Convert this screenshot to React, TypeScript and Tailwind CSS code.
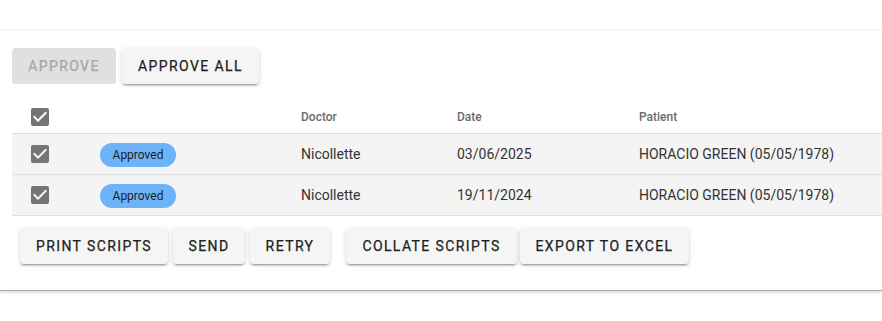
import React from 'react';

interface ScriptRow {
  id: number;
  status: string;
  doctor: string;
  date: string;
  patient: string;
}

const rows: ScriptRow[] = [
  { id: 1, status: 'Approved', doctor: 'Nicollette', date: '03/06/2025', patient: 'HORACIO GREEN (05/05/1978)' },
  { id: 2, status: 'Approved', doctor: 'Nicollette', date: '19/11/2024', patient: 'HORACIO GREEN (05/05/1978)' },
];

const raised =
  'shadow-[0_3px_1px_-2px_rgba(0,0,0,0.2),0_2px_2px_0_rgba(0,0,0,0.14),0_1px_5px_0_rgba(0,0,0,0.12)]';

// MUI style checked box
const CheckIcon: React.FC = () => (
  <svg width="24" height="24" viewBox="0 0 24 24" className="block">
    <path
      fill="#757575"
      d="M19 3H5c-1.11 0-2 .9-2 2v14c0 1.1.89 2 2 2h14c1.11 0 2-.9 2-2V5c0-1.1-.89-2-2-2zm-9 14l-5-5 1.41-1.41L10 14.17l7.59-7.59L19 8l-9 9z"
    />
  </svg>
);

interface ActionButtonProps {
  label: string;
  width: string;
  className?: string;
  disabled?: boolean;
}

const ActionButton: React.FC<ActionButtonProps> = ({ label, width, className = '', disabled }) => (
  <button
    disabled={disabled}
    className={`${width} h-9 rounded-[4px] text-[14px] font-normal tracking-[0.1em] leading-none flex items-center justify-center [-webkit-text-stroke:0.25px_currentColor] ${
      disabled ? 'bg-[#e0e0e0] text-[#a6a6a6]' : `bg-[#f5f5f5] text-[#212121] ${raised}`
    } ${className}`}
  >
    {label}
  </button>
);

const gridCols = 'grid grid-cols-[88px_201px_156px_182px_1fr] items-center';

export default function App() {
  return (
    <div className="w-[882px] h-[321px] bg-white font-['Roboto',sans-serif] overflow-hidden">
      <div className="mt-[29px] border-t border-[#f3f3f3] border-b border-b-[#a8a8a8] shadow-[0_2px_2px_rgba(0,0,0,0.12)] pt-[18px] pb-[26px] pl-3">
        {/* Approve actions */}
        <div className="flex gap-[6px]">
          <ActionButton label="APPROVE" width="w-[104px]" disabled />
          <ActionButton label="APPROVE ALL" width="w-[137px]" />
        </div>

        {/* Table */}
        <div className="mt-[17px]">
          <div className={`${gridCols} h-[33px] border-b border-[#e0e0e0]`}>
            <div className="pl-4">
              <CheckIcon />
            </div>
            <div />
            <div className="text-[12px] font-medium text-[#6b6b6b]">Doctor</div>
            <div className="text-[12px] font-medium text-[#6b6b6b]">Date</div>
            <div className="text-[12px] font-medium text-[#6b6b6b]">Patient</div>
          </div>
          {rows.map(row => (
            <div key={row.id} className={`${gridCols} h-[41px] bg-[#f4f4f4] border-b border-[#e0e0e0]`}>
              <div className="pl-4">
                <CheckIcon />
              </div>
              <div>
                <span className="inline-flex items-center justify-center w-[76px] h-6 rounded-full bg-[#6cb4f7] text-[12px] text-[#1c1c1c]">
                  {row.status}
                </span>
              </div>
              <div className="text-[14px] text-[#333333]">{row.doctor}</div>
              <div className="text-[14px] text-[#333333]">{row.date}</div>
              <div className="text-[14px] text-[#333333]">{row.patient}</div>
            </div>
          ))}
        </div>

        {/* Script actions */}
        <div className="flex mt-3 pl-2">
          <ActionButton label="PRINT SCRIPTS" width="w-[148px]" />
          <ActionButton label="SEND" width="w-[72px]" className="ml-[5px]" />
          <ActionButton label="RETRY" width="w-[80px]" className="ml-[5px]" />
          <ActionButton label="COLLATE SCRIPTS" width="w-[171px]" className="ml-4" />
          <ActionButton label="EXPORT TO EXCEL" width="w-[169px]" className="ml-[3px]" />
        </div>
      </div>
    </div>
  );
}
